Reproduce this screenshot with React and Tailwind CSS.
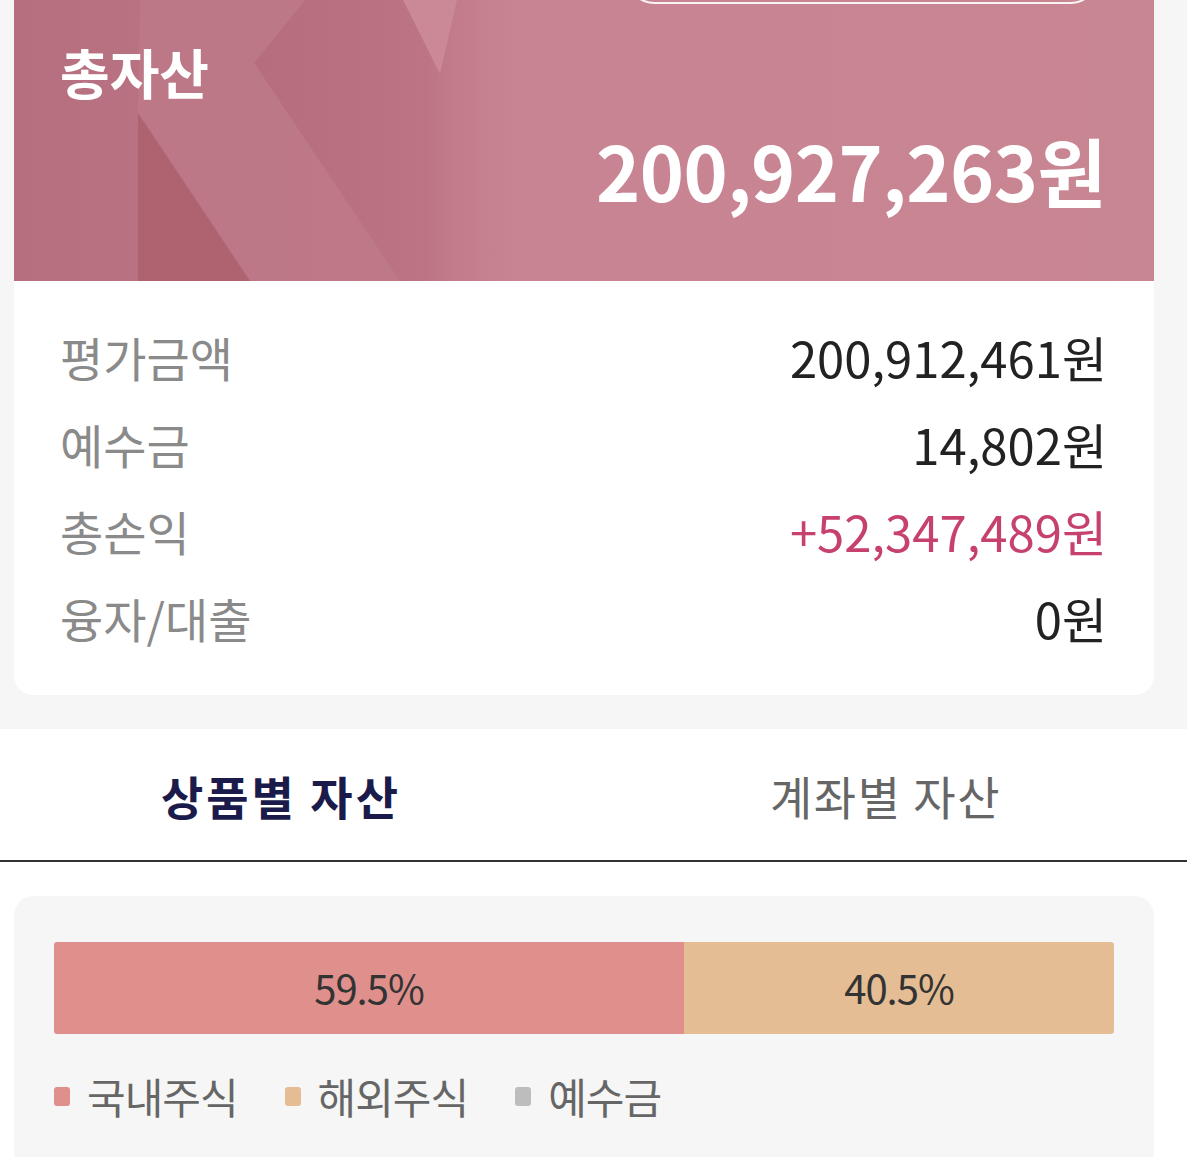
import React from "react";

const FONT = { fontFamily: '"Noto Sans CJK KR", "Noto Sans", sans-serif' };

function HeaderBg() {
  return (
    <svg
      className="absolute inset-0 h-full w-full"
      viewBox="0 0 1140 281"
      preserveAspectRatio="none"
      aria-hidden="true"
    >
      <defs>
        <linearGradient id="base" x1="0" y1="0" x2="1" y2="0">
          <stop offset="0" stopColor="#b66f7f" />
          <stop offset="0.33" stopColor="#bd7786" />
          <stop offset="0.44" stopColor="#c88492" />
          <stop offset="1" stopColor="#c88592" />
        </linearGradient>
        <linearGradient id="dark" x1="0" y1="0" x2="1" y2="0">
          <stop offset="0" stopColor="#b56d7e" stopOpacity="0.9" />
          <stop offset="0.7" stopColor="#bb7282" stopOpacity="0.65" />
          <stop offset="1" stopColor="#c88492" stopOpacity="0" />
        </linearGradient>
      </defs>
      <rect x="0" y="0" width="1140" height="281" fill="url(#base)" />
      <polygon points="291,0 470,0 490,281 386,281 240,63" fill="url(#dark)" />
      <polygon
        points="126,0 291,0 240,63 386,281 236,281 124,113"
        fill="#be7987"
        opacity="0.9"
      />
      <polygon points="124,113 124,281 236,281" fill="#ad606f" opacity="0.85" />
      <polygon points="389,0 443,0 426,74" fill="#cc8b99" opacity="0.9" />
    </svg>
  );
}

function Row({ label, value, valueClass }) {
  return (
    <div className="flex h-[87px] items-center justify-between">
      <span className="text-[47px] leading-none text-[#8a8a8a]">{label}</span>
      <span className={`text-[49px] leading-none ${valueClass}`}>{value}</span>
    </div>
  );
}

function Legend({ color, label }) {
  return (
    <div className="flex items-center">
      <span className={`mr-[17px] h-[19px] w-[16px] rounded-[3px] ${color}`} />
      <span className="text-[42px] leading-none tracking-[-1px] text-[#666666]">
        {label}
      </span>
    </div>
  );
}

export default function App() {
  return (
    <div className="w-[1187px] overflow-hidden bg-white" style={FONT}>
      <div className="bg-[#f6f6f6] px-[14px] pr-[33px] pb-[34px]">
        <div className="overflow-hidden rounded-b-[20px] bg-white">
          <div className="relative h-[281px] overflow-hidden">
            <HeaderBg />
            <div className="absolute left-[611px] top-[-56px] h-[60px] w-[475px] rounded-full border-2 border-white/90" />
            <div className="relative flex h-full flex-col pl-[46px] pr-[48px] pt-[42px]">
              <div className="text-[54px] font-bold leading-[60px] text-white">
                총자산
              </div>
              <div className="mt-[23px] text-right text-[75px] font-bold leading-[90px] tracking-[-0.5px] text-white">
                200,927,263원
              </div>
            </div>
          </div>
          <div className="flex flex-col pl-[46px] pr-[47px] pt-[32px] pb-[34px]">
            <Row label="평가금액" value="200,912,461원" valueClass="text-[#222222]" />
            <Row label="예수금" value="14,802원" valueClass="text-[#222222]" />
            <Row label="총손익" value="+52,347,489원" valueClass="text-[#c7416f]" />
            <Row label="융자/대출" value="0원" valueClass="text-[#222222]" />
          </div>
        </div>
      </div>

      <div className="flex h-[133px] items-center border-b-2 border-[#333333] bg-white">
        <div className="w-[562px] text-center text-[46px] font-bold leading-none tracking-[3px] text-[#1b1b4b]">
          상품별 자산
        </div>
        <div className="flex-1 pl-[22px] text-center text-[46px] leading-none tracking-[1.5px] text-[#666666]">
          계좌별 자산
        </div>
      </div>

      <div className="bg-white px-[14px] pr-[33px] pt-[34px]">
        <div className="h-[270px] rounded-t-[20px] bg-[#f6f6f6] px-[40px] pt-[46px]">
          <div className="flex h-[92px] overflow-hidden rounded-[3px]">
            <div className="flex w-[630px] items-center justify-center bg-[#df908c] pb-[3px] text-[40px] leading-none tracking-[-1px] text-[#333333]">
              59.5%
            </div>
            <div className="flex flex-1 items-center justify-center bg-[#e4bd94] pb-[3px] text-[40px] leading-none tracking-[-1px] text-[#333333]">
              40.5%
            </div>
          </div>
          <div className="mt-[41px] flex items-center gap-[47px]">
            <Legend color="bg-[#df908c]" label="국내주식" />
            <Legend color="bg-[#e4bd94]" label="해외주식" />
            <Legend color="bg-[#bdbdbd]" label="예수금" />
          </div>
        </div>
      </div>
    </div>
  );
}
